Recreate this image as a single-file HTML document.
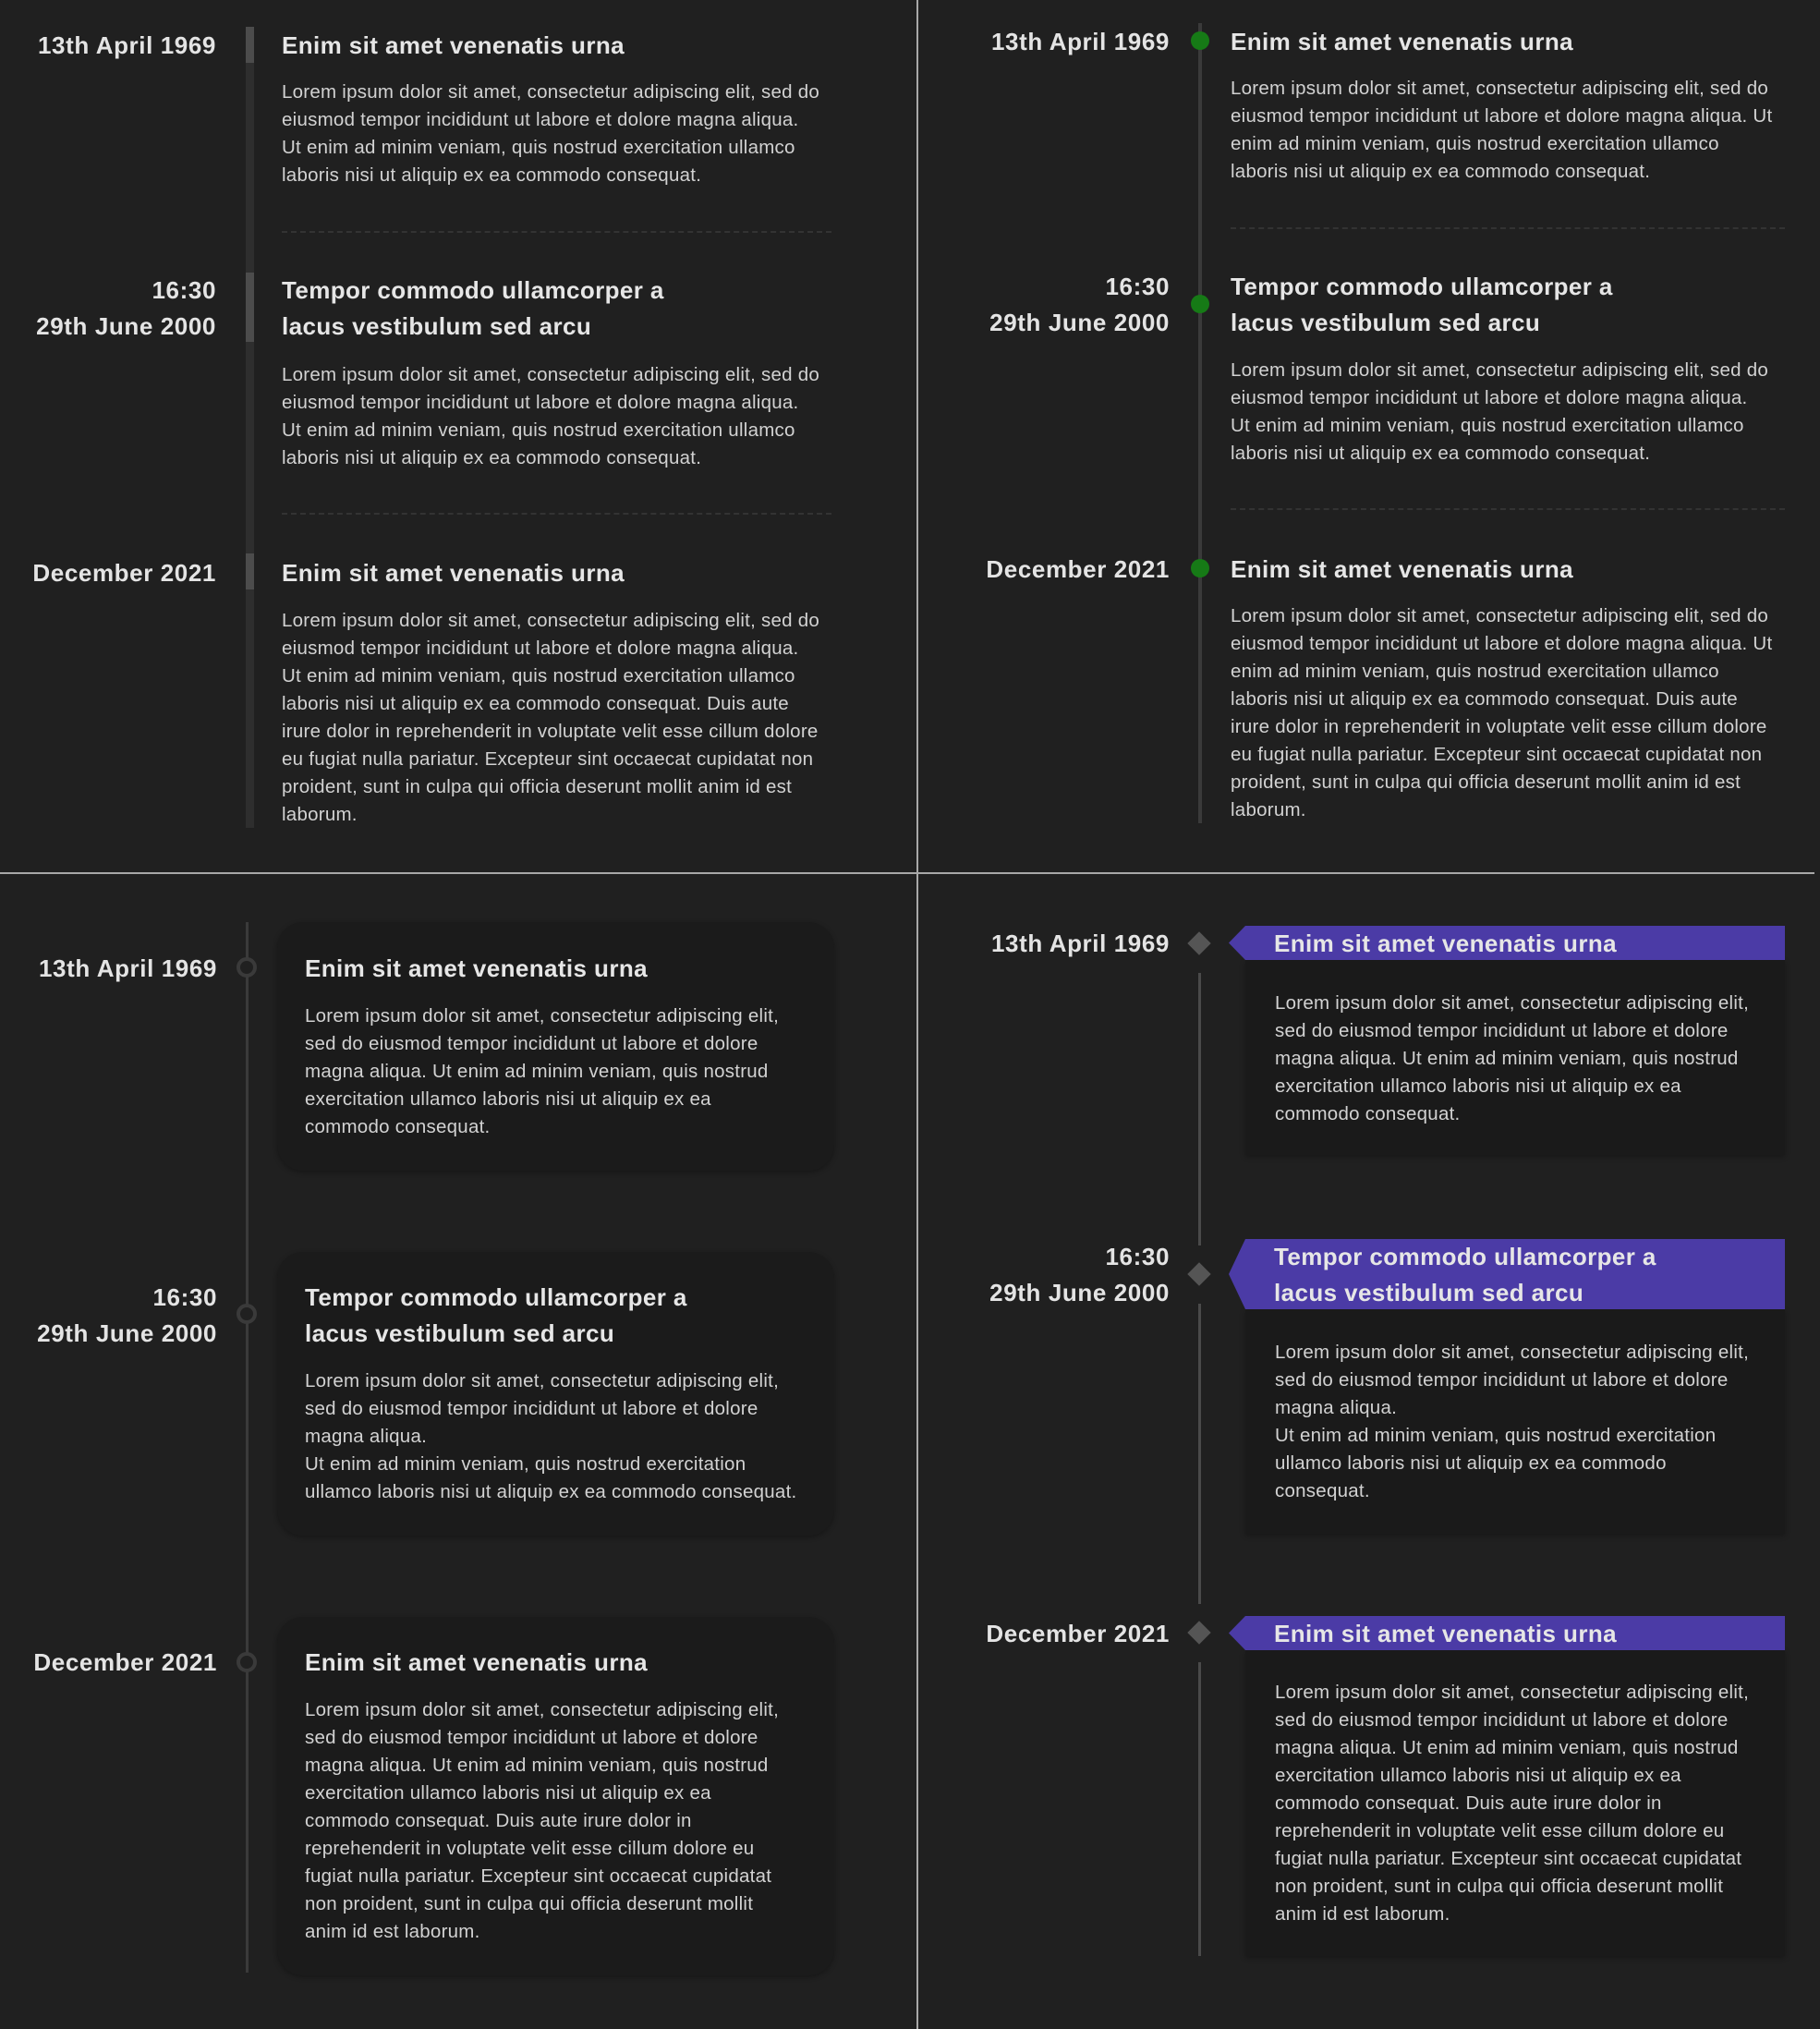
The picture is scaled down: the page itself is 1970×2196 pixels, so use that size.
<!DOCTYPE html>
<html><head><meta charset="utf-8"><style>
*{margin:0;padding:0;box-sizing:border-box}
body{width:1970px;height:2196px;background:#202020;position:relative;overflow:hidden;font-family:"Liberation Sans",sans-serif}
.a{position:absolute}
.d{position:absolute;font-weight:bold;font-size:26px;color:#e4e4e4;line-height:39px;text-align:right;white-space:nowrap;letter-spacing:0.6px}
.t{position:absolute;font-weight:bold;font-size:26px;color:#e6e6e6;line-height:39px;white-space:nowrap;letter-spacing:0.4px}
.p{position:absolute;font-size:20.5px;color:#d2d2d2;line-height:30px;white-space:nowrap;letter-spacing:0.25px}
.sep{position:absolute;height:0;border-top:2px dashed #333}
.dot{position:absolute;width:20px;height:20px;border-radius:50%;background:#167a16}
.ring{position:absolute;width:22px;height:22px;border-radius:50%;border:4px solid #3a3a3a;background:#202020}
.card{position:absolute;background:#1b1b1b;border-radius:28px;box-shadow:0 2px 6px rgba(0,0,0,.3)}
.dia{position:absolute;width:18px;height:18px;background:#555;transform:rotate(45deg)}
.hdr{position:absolute;background:#4b3ba6;clip-path:polygon(18px 0,100% 0,100% 100%,18px 100%,0 50%)}
.box{position:absolute;background:#1a1a1a;box-shadow:0 2px 6px rgba(0,0,0,.3)}
</style></head><body>
<div class="a" style="left:992px;top:0;width:2px;height:2196px;background:#a8a8a8"></div>
<div class="a" style="left:0;top:944px;width:1964px;height:2px;background:#a8a8a8"></div>

<!-- PANEL 1 -->
<div class="a" style="left:266px;top:31px;width:9px;height:865px;background:#2e2e2e"></div>
<div class="a" style="left:266px;top:29px;width:9px;height:39px;background:#4c4c4c"></div>
<div class="a" style="left:266px;top:295px;width:9px;height:75px;background:#4c4c4c"></div>
<div class="a" style="left:266px;top:599px;width:9px;height:39px;background:#4c4c4c"></div>
<div class="d" style="right:1736px;top:30px">13th April 1969</div>
<div class="t" style="left:305px;top:30px">Enim sit amet venenatis urna</div>
<div class="p" style="left:305px;top:85px">Lorem ipsum dolor sit amet, consectetur adipiscing elit, sed do<br>eiusmod tempor incididunt ut labore et dolore magna aliqua.<br>Ut enim ad minim veniam, quis nostrud exercitation ullamco<br>laboris nisi ut aliquip ex ea commodo consequat.</div>
<div class="sep" style="left:305px;top:250px;width:595px"></div>
<div class="d" style="right:1736px;top:295px">16:30<br>29th June 2000</div>
<div class="t" style="left:305px;top:295px">Tempor commodo ullamcorper a<br>lacus vestibulum sed arcu</div>
<div class="p" style="left:305px;top:391px">Lorem ipsum dolor sit amet, consectetur adipiscing elit, sed do<br>eiusmod tempor incididunt ut labore et dolore magna aliqua.<br>Ut enim ad minim veniam, quis nostrud exercitation ullamco<br>laboris nisi ut aliquip ex ea commodo consequat.</div>
<div class="sep" style="left:305px;top:555px;width:595px"></div>
<div class="d" style="right:1736px;top:601px">December 2021</div>
<div class="t" style="left:305px;top:601px">Enim sit amet venenatis urna</div>
<div class="p" style="left:305px;top:657px">Lorem ipsum dolor sit amet, consectetur adipiscing elit, sed do<br>eiusmod tempor incididunt ut labore et dolore magna aliqua.<br>Ut enim ad minim veniam, quis nostrud exercitation ullamco<br>laboris nisi ut aliquip ex ea commodo consequat. Duis aute<br>irure dolor in reprehenderit in voluptate velit esse cillum dolore<br>eu fugiat nulla pariatur. Excepteur sint occaecat cupidatat non<br>proident, sunt in culpa qui officia deserunt mollit anim id est<br>laborum.</div>

<!-- PANEL 2 -->
<div class="a" style="left:1297px;top:25px;width:4px;height:866px;background:#3a3a3a"></div>
<div class="dot" style="left:1289px;top:34px"></div>
<div class="dot" style="left:1289px;top:319px"></div>
<div class="dot" style="left:1289px;top:605px"></div>
<div class="d" style="right:704px;top:26px">13th April 1969</div>
<div class="t" style="left:1332px;top:26px">Enim sit amet venenatis urna</div>
<div class="p" style="left:1332px;top:81px">Lorem ipsum dolor sit amet, consectetur adipiscing elit, sed do<br>eiusmod tempor incididunt ut labore et dolore magna aliqua. Ut<br>enim ad minim veniam, quis nostrud exercitation ullamco<br>laboris nisi ut aliquip ex ea commodo consequat.</div>
<div class="sep" style="left:1332px;top:246px;width:600px"></div>
<div class="d" style="right:704px;top:291px">16:30<br>29th June 2000</div>
<div class="t" style="left:1332px;top:291px">Tempor commodo ullamcorper a<br>lacus vestibulum sed arcu</div>
<div class="p" style="left:1332px;top:386px">Lorem ipsum dolor sit amet, consectetur adipiscing elit, sed do<br>eiusmod tempor incididunt ut labore et dolore magna aliqua.<br>Ut enim ad minim veniam, quis nostrud exercitation ullamco<br>laboris nisi ut aliquip ex ea commodo consequat.</div>
<div class="sep" style="left:1332px;top:550px;width:600px"></div>
<div class="d" style="right:704px;top:597px">December 2021</div>
<div class="t" style="left:1332px;top:597px">Enim sit amet venenatis urna</div>
<div class="p" style="left:1332px;top:652px">Lorem ipsum dolor sit amet, consectetur adipiscing elit, sed do<br>eiusmod tempor incididunt ut labore et dolore magna aliqua. Ut<br>enim ad minim veniam, quis nostrud exercitation ullamco<br>laboris nisi ut aliquip ex ea commodo consequat. Duis aute<br>irure dolor in reprehenderit in voluptate velit esse cillum dolore<br>eu fugiat nulla pariatur. Excepteur sint occaecat cupidatat non<br>proident, sunt in culpa qui officia deserunt mollit anim id est<br>laborum.</div>

<!-- PANEL 3 -->
<div class="a" style="left:266px;top:998px;width:3px;height:1137px;background:#3a3a3a"></div>
<div class="ring" style="left:256px;top:1036px"></div>
<div class="ring" style="left:256px;top:1411px"></div>
<div class="ring" style="left:256px;top:1788px"></div>
<div class="card" style="left:300px;top:998px;width:603px;height:269px"></div>
<div class="card" style="left:300px;top:1355px;width:603px;height:307px"></div>
<div class="card" style="left:300px;top:1750px;width:603px;height:388px"></div>
<div class="d" style="right:1735px;top:1029px">13th April 1969</div>
<div class="t" style="left:330px;top:1029px">Enim sit amet venenatis urna</div>
<div class="p" style="left:330px;top:1085px">Lorem ipsum dolor sit amet, consectetur adipiscing elit,<br>sed do eiusmod tempor incididunt ut labore et dolore<br>magna aliqua. Ut enim ad minim veniam, quis nostrud<br>exercitation ullamco laboris nisi ut aliquip ex ea<br>commodo consequat.</div>
<div class="d" style="right:1735px;top:1385px">16:30<br>29th June 2000</div>
<div class="t" style="left:330px;top:1385px">Tempor commodo ullamcorper a<br>lacus vestibulum sed arcu</div>
<div class="p" style="left:330px;top:1480px">Lorem ipsum dolor sit amet, consectetur adipiscing elit,<br>sed do eiusmod tempor incididunt ut labore et dolore<br>magna aliqua.<br>Ut enim ad minim veniam, quis nostrud exercitation<br>ullamco laboris nisi ut aliquip ex ea commodo consequat.</div>
<div class="d" style="right:1735px;top:1780px">December 2021</div>
<div class="t" style="left:330px;top:1780px">Enim sit amet venenatis urna</div>
<div class="p" style="left:330px;top:1836px">Lorem ipsum dolor sit amet, consectetur adipiscing elit,<br>sed do eiusmod tempor incididunt ut labore et dolore<br>magna aliqua. Ut enim ad minim veniam, quis nostrud<br>exercitation ullamco laboris nisi ut aliquip ex ea<br>commodo consequat. Duis aute irure dolor in<br>reprehenderit in voluptate velit esse cillum dolore eu<br>fugiat nulla pariatur. Excepteur sint occaecat cupidatat<br>non proident, sunt in culpa qui officia deserunt mollit<br>anim id est laborum.</div>

<!-- PANEL 4 -->
<div class="a" style="left:1297px;top:1053px;width:3px;height:295px;background:#4a4a4a"></div>
<div class="a" style="left:1297px;top:1411px;width:3px;height:325px;background:#4a4a4a"></div>
<div class="a" style="left:1297px;top:1799px;width:3px;height:318px;background:#4a4a4a"></div>
<div class="dia" style="left:1289px;top:1012px"></div>
<div class="dia" style="left:1289px;top:1370px"></div>
<div class="dia" style="left:1289px;top:1758px"></div>
<div class="box" style="left:1348px;top:1039px;width:584px;height:211px"></div>
<div class="box" style="left:1348px;top:1417px;width:584px;height:243px"></div>
<div class="box" style="left:1348px;top:1786px;width:584px;height:331px"></div>
<div class="hdr" style="left:1330px;top:1002px;width:602px;height:37px"></div>
<div class="hdr" style="left:1330px;top:1341px;width:602px;height:76px"></div>
<div class="hdr" style="left:1330px;top:1749px;width:602px;height:37px"></div>
<div class="d" style="right:704px;top:1002px">13th April 1969</div>
<div class="t" style="left:1379px;top:1002px">Enim sit amet venenatis urna</div>
<div class="p" style="left:1380px;top:1071px">Lorem ipsum dolor sit amet, consectetur adipiscing elit,<br>sed do eiusmod tempor incididunt ut labore et dolore<br>magna aliqua. Ut enim ad minim veniam, quis nostrud<br>exercitation ullamco laboris nisi ut aliquip ex ea<br>commodo consequat.</div>
<div class="d" style="right:704px;top:1341px">16:30<br>29th June 2000</div>
<div class="t" style="left:1379px;top:1341px">Tempor commodo ullamcorper a<br>lacus vestibulum sed arcu</div>
<div class="p" style="left:1380px;top:1449px">Lorem ipsum dolor sit amet, consectetur adipiscing elit,<br>sed do eiusmod tempor incididunt ut labore et dolore<br>magna aliqua.<br>Ut enim ad minim veniam, quis nostrud exercitation<br>ullamco laboris nisi ut aliquip ex ea commodo<br>consequat.</div>
<div class="d" style="right:704px;top:1749px">December 2021</div>
<div class="t" style="left:1379px;top:1749px">Enim sit amet venenatis urna</div>
<div class="p" style="left:1380px;top:1817px">Lorem ipsum dolor sit amet, consectetur adipiscing elit,<br>sed do eiusmod tempor incididunt ut labore et dolore<br>magna aliqua. Ut enim ad minim veniam, quis nostrud<br>exercitation ullamco laboris nisi ut aliquip ex ea<br>commodo consequat. Duis aute irure dolor in<br>reprehenderit in voluptate velit esse cillum dolore eu<br>fugiat nulla pariatur. Excepteur sint occaecat cupidatat<br>non proident, sunt in culpa qui officia deserunt mollit<br>anim id est laborum.</div>
</body></html>
